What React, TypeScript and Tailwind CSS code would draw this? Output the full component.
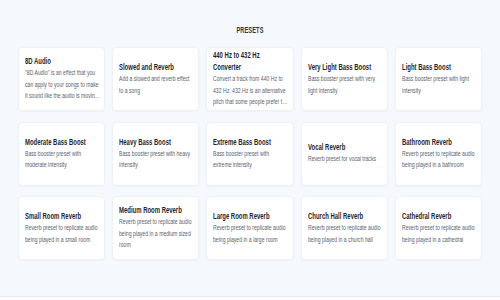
const presets = [
  {
    name: '8D Audio',
    desc: '"8D Audio" is an effect that you can apply to your songs to make it sound like the audio is moving around your head in a circle.',
  },
  { name: 'Slowed and Reverb', desc: 'Add a slowed and reverb effect to a song' },
  {
    name: '440 Hz to 432 Hz Converter',
    desc: 'Convert a track from 440 Hz to 432 Hz. 432 Hz is an alternative pitch that some people prefer to listen to.',
  },
  { name: 'Very Light Bass Boost', desc: 'Bass booster preset with very light intensity' },
  { name: 'Light Bass Boost', desc: 'Bass booster preset with light intensity' },
  { name: 'Moderate Bass Boost', desc: 'Bass booster preset with moderate intensity' },
  { name: 'Heavy Bass Boost', desc: 'Bass booster preset with heavy intensity' },
  { name: 'Extreme Bass Boost', desc: 'Bass booster preset with extreme intensity' },
  { name: 'Vocal Reverb', desc: 'Reverb preset for vocal tracks' },
  { name: 'Bathroom Reverb', desc: 'Reverb preset to replicate audio being played in a bathroom' },
  { name: 'Small Room Reverb', desc: 'Reverb preset to replicate audio being played in a small room' },
  { name: 'Medium Room Reverb', desc: 'Reverb preset to replicate audio being played in a medium sized room' },
  { name: 'Large Room Reverb', desc: 'Reverb preset to replicate audio being played in a large room' },
  { name: 'Church Hall Reverb', desc: 'Reverb preset to replicate audio being played in a church hall' },
  { name: 'Cathedral Reverb', desc: 'Reverb preset to replicate audio being played in a cathedral' },
];

function PresetCard({ name, desc }: { name: string; desc: string }) {
  return (
    <div className="h-[64px] rounded-[4px] bg-white border border-[#eef1f6] shadow-[0_1px_2px_rgba(15,23,42,0.03)] px-[6px] flex flex-col justify-center">
      <div className="w-[162%] origin-left scale-x-[0.64]">
        <h3 className="text-[9.3px] leading-[12px] font-bold text-[#1f2430]">{name}</h3>
        <p className="text-[8px] leading-[11.5px] text-[#5a616e] line-clamp-3 pb-[1px]">{desc}</p>
      </div>
    </div>
  );
}

export default function App() {
  return (
    <div className="h-[300px] flex flex-col bg-white font-['Liberation_Sans',Arial,sans-serif]">
      <main className="h-[296px] bg-[#f5f8fc] px-[18px] pt-[24px]">
        <h2 className="text-center text-[8.5px] leading-[12px] font-semibold tracking-[0.2px] text-[#2f3542] scale-x-[0.66]">
          PRESETS
        </h2>
        <div className="mt-[11px] grid grid-cols-5 gap-x-[7px] gap-y-[10.5px]">
          {presets.map((p) => (
            <PresetCard key={p.name} name={p.name} desc={p.desc} />
          ))}
        </div>
      </main>
      <footer className="flex-1 border-t border-[#e6ebf1] bg-white" />
    </div>
  );
}
